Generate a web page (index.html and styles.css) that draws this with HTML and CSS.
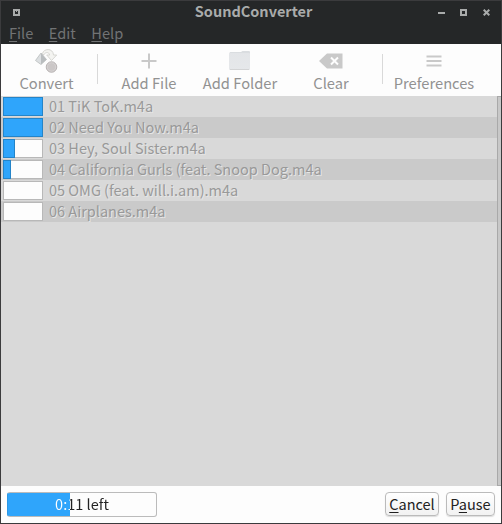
FILE: index.html
```html
<!DOCTYPE html>
<html lang="en">
<head>
<meta charset="utf-8">
<title>SoundConverter</title>
<link rel="stylesheet" href="styles.css">
</head>
<body>
<div class="window">
  <header class="titlebar">
    <svg class="win-icon" width="7" height="7" viewBox="0 0 7 7" shape-rendering="crispEdges"><path d="M0 0h7v7H0z" fill="#a9abab"/><path d="M2 2h3v3H2z" fill="#252728"/><path d="M3 2h1v1H3z" fill="#a9abab"/></svg>
    <h1 class="title">SoundConverter</h1>
    <div class="controls">
      <svg width="7" height="7" viewBox="0 0 7 7"><path d="M0 3h7v2H0z" fill="#a9abab"/></svg>
      <svg width="7" height="7" viewBox="0 0 7 7"><path d="M1 1h5v5H1z" fill="none" stroke="#a9abab" stroke-width="2"/></svg>
      <svg class="close" width="7" height="7" viewBox="0 0 7 7"><path d="M.7.7l5.6 5.6M6.3.7L.7 6.3" stroke="#a9abab" stroke-width="2"/></svg>
    </div>
  </header>
  <nav class="menubar">
    <span class="menu"><u>F</u>ile</span>
    <span class="menu"><u>E</u>dit</span>
    <span class="menu"><u>H</u>elp</span>
  </nav>
  <div class="toolbar">
    <div class="tool">
      <svg width="24" height="24" viewBox="0 0 24 24">
        <path d="M7.500 4.500C8.500 -.5 18 -1.500 18.500 6h3.200l-5.200 5.500-4.800-5.500h3C14 2.800 10.500 2.800 8.500 6z" fill="#f4f4f1" stroke="#d3d3ce" stroke-width=".9"/>
        <path d="M6 4L.5 11.500 6 15.500z" fill="#dcdfe1"/><path d="M6 4l5.500 6.500L6 15.500z" fill="#b9bdbf"/>
        <path d="M6 4L.5 11.500 6 15.500l5.500-5z" fill="none" stroke="#b9bcbd" stroke-width=".8"/>
        <circle cx="16.500" cy="18" r="5.300" fill="#cbc7c7" stroke="#aeaaaa" stroke-width=".8"/>
        <circle cx="16.500" cy="18" r="4.200" fill="none" stroke="#d8d5d5" stroke-width=".7"/>
      </svg>
      <span>Convert</span>
    </div>
    <i class="separator"></i>
    <div class="tool">
      <svg width="24" height="24" viewBox="0 0 24 24"><path d="M4.500 12h15M12 4.500v15" stroke="#c9c9c9" stroke-width="2"/></svg>
      <span>Add File</span>
    </div>
    <div class="tool">
      <svg width="24" height="24" viewBox="0 0 24 24">
        <defs><linearGradient id="folder" x2="0" y2="1"><stop stop-color="#e3e5e8"/><stop offset="1" stop-color="#e6e8ea"/></linearGradient></defs>
        <path d="M1.500 4q0-1 1-1H13l1.500-1H21q1 0 1 1v2H1.500z" fill="#dadde0"/>
        <rect x="1" y="4" width="21" height="17" rx="1" fill="url(#folder)"/>
        <path d="M2 20.500h19" stroke="#d3d4d5"/>
      </svg>
      <span>Add Folder</span>
    </div>
    <div class="tool">
      <svg width="24" height="24" viewBox="0 0 24 24"><path d="M0 12l8-7.500h15.500v15H8z" fill="#c9c9c9"/><path d="M12 8.500l7 7M19 8.500l-7 7" stroke="#fdfdfd" stroke-width="2"/></svg>
      <span>Clear</span>
    </div>
    <i class="separator"></i>
    <div class="tool">
      <svg width="24" height="24" viewBox="0 0 24 24"><path d="M4.500 7.500h15M4.500 12h15M4.500 16.500h15" stroke="#c9c9c9" stroke-width="2"/></svg>
      <span>Preferences</span>
    </div>
  </div>
  <main class="files">
    <div class="list">
      <div class="row"><div class="meter"><b class="fill" style="width:40px"></b></div><span>01 TiK ToK.m4a</span></div>
      <div class="row"><div class="meter"><b class="fill" style="width:40px"></b></div><span>02 Need You Now.m4a</span></div>
      <div class="row"><div class="meter"><b class="fill" style="width:12px"></b></div><span>03 Hey, Soul Sister.m4a</span></div>
      <div class="row"><div class="meter"><b class="fill" style="width:8px"></b></div><span>04 California Gurls (feat. Snoop Dog.m4a</span></div>
      <div class="row"><div class="meter"></div><span>05 OMG (feat. will.i.am).m4a</span></div>
      <div class="row"><div class="meter"></div><span>06 Airplanes.m4a</span></div>
    </div>
    <div class="scrollbar"></div>
  </main>
  <footer class="footer">
    <div class="progress"><span class="progress-text">0:11 left</span></div>
    <button class="button cancel"><u>C</u>ancel</button>
    <button class="button pause">P<u>a</u>use</button>
  </footer>
</div>
</body>
</html>
```
FILE: styles.css
```css
* { box-sizing: border-box; }
body {
  margin: 0;
  font: 14.5px/20px "Noto Sans CJK SC", "Open Sans", sans-serif;
  color: #222;
}
.window {
  width: 502px;
  height: 524px;
  display: flex;
  flex-direction: column;
  border: 1px solid #3b3b3d;
  background: #fdfdfd;
  overflow: hidden;
}
svg { display: block; flex: none; }
u { text-decoration: underline; text-decoration-thickness: 1px; text-underline-offset: 2px; }
.titlebar {
  flex: none;
  height: 23px;
  display: grid;
  grid-template-columns: 60px 1fr 60px;
  align-items: center;
  background: #252728;
}
.win-icon { margin-left: 12px; }
.title { margin: 0 0 0 5px; font-size: 14.5px; line-height: 18px; height: 22px; text-align: center; color: #a9abab; }
.controls { display: flex; gap: 15px; justify-content: flex-end; padding-right: 11px; }
.close { margin-left: 1px; }
.menubar {
  flex: none;
  height: 20px;
  display: flex;
  gap: 15.5px;
  padding-left: 8px;
  font-size: 14.6px;
  line-height: 18px;
  color: #717374;
  background: #252728;
}
.toolbar {
  flex: none;
  height: 52px;
  display: grid;
  grid-template-columns: 91px 11px 92px 90px 92px 10px 94px;
  font-size: 14.7px;
  color: #929292;
}
.tool { display: flex; flex-direction: column; align-items: center; padding-top: 5px; line-height: 19px; white-space: nowrap; }
.separator { width: 1px; height: 30px; margin: 10px 0 0 5px; background: #d9d9d9; }
.files { flex: 1; display: flex; background: #d9d9d9; color: #999; text-shadow: 1px 1px #e6e6e6; }
.list { flex: 1; margin-right: -4px; }
.scrollbar { width: 4px; border: 1px solid #a9a9a9; border-right: 0; background: #c8c8c8; }
.row { height: 21px; display: flex; align-items: flex-start; gap: 6px; padding: 1px 0 0 2px; line-height: 18px; white-space: nowrap; }
.row:nth-child(even) { background: #cacaca; }
.meter { width: 40px; height: 19px; border: 1px solid #b8b8b8; background: #fdfdfd; }
.fill { display: block; height: 19px; margin: -1px; border: 1px solid #2484c8; background: #2fa5fb; }
.footer { flex: none; height: 37px; display: flex; padding: 6px 6px 6px 6px; }
.progress {
  width: 150px;
  height: 25px;
  border: 1px solid #bbb;
  border-left-color: #2b98e6;
  border-radius: 3px;
  background: linear-gradient(90deg, #2fa5fb 63px, #fdfdfd 63px) border-box;
  text-align: center;
  line-height: 21px;
}
.progress-text {
  background: linear-gradient(90deg, #fff 15px, #222 15px);
  background-clip: text;
  color: transparent;
}
.button {
  height: 24px;
  margin-top: 0;
  padding: 0 0 1px;
  font: inherit;
  line-height: 20px;
  color: #222;
  border: 1px solid #bbb;
  border-radius: 4px;
  background: linear-gradient(#fff, #f2f2f2);
  box-shadow: 0 1px 1px #ddd;
}
.cancel { width: 54px; margin-left: auto; }
.pause { width: 49px; margin-left: 7px; }
```
